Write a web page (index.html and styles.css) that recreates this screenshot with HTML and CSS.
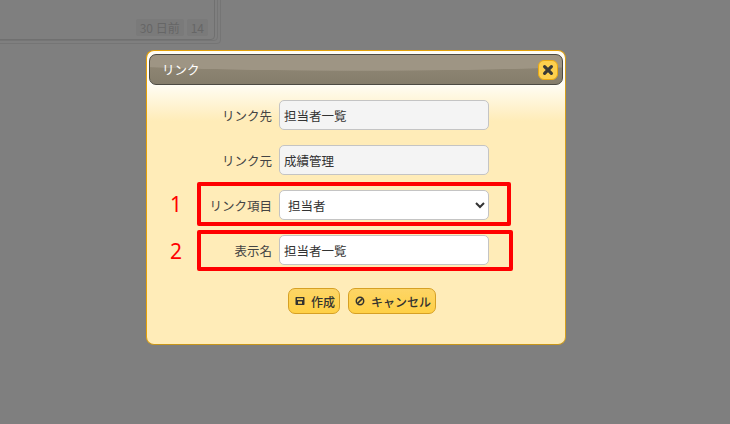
FILE: index.html
```html
<!DOCTYPE html>
<html lang="ja">
<head>
<meta charset="utf-8">
<title>リンク</title>
<link rel="stylesheet" href="styles.css">
</head>
<body>
<div class="backdrop">
  <div class="stack stack-3"></div>
  <div class="stack stack-2"></div>
  <div class="stack stack-1">
    <span class="tag">30 日前</span>
    <span class="tag">14</span>
  </div>
</div>
<div class="dialog">
  <div class="titlebar">
    <span class="title">リンク</span>
    <button class="close" type="button" aria-label="閉じる">
      <svg width="12" height="12" viewBox="0 0 12 12"><path d="M2.6 2.6 9.4 9.4M9.4 2.6 2.6 9.4" stroke="#3a3a36" stroke-width="3.2" stroke-linecap="round" fill="none"/></svg>
    </button>
  </div>
  <div class="body">
    <div class="row">
      <label class="label">リンク先</label>
      <input class="field readonly" value="担当者一覧" readonly>
    </div>
    <div class="row">
      <label class="label">リンク元</label>
      <input class="field readonly" value="成績管理" readonly>
    </div>
    <div class="row">
      <label class="label">リンク項目</label>
      <select class="field select"><option>担当者</option></select>
    </div>
    <div class="row">
      <label class="label">表示名</label>
      <input class="field" value="担当者一覧">
    </div>
    <div class="actions">
      <button class="btn" type="button">
        <svg width="10" height="10" viewBox="0 0 10 10"><path fill-rule="evenodd" d="M1.2 1H8.800000000000001Q9.5 1 9.5 1.7V8.3Q9.5 9 8.8 9H1.2Q.5 9 .5 8.3V1.7Q.5 1 1.2 1ZM2 2.2V4H8V2.2ZM3 5.6V7.800000000000001H7V5.6Z" fill="#33332f"/></svg>
        作成
      </button>
      <button class="btn" type="button">
        <svg width="10" height="10" viewBox="0 0 10 10"><circle cx="5" cy="5" r="3.7" stroke="#33332f" stroke-width="1.5" fill="none"/><path d="M2.6 7.4 7.4 2.6" stroke="#33332f" stroke-width="1.5"/></svg>
        キャンセル
      </button>
    </div>
  </div>
</div>
<div class="mark mark-1"></div>
<div class="mark mark-2"></div>
<span class="num num-1">1</span>
<span class="num num-2">2</span>
</body>
</html>
```
FILE: styles.css
```css
html, body {
  margin: 0;
  height: 100%;
  overflow: hidden;
}
body {
  position: relative;
  width: 730px;
  height: 424px;
  background: #7f7f7f;
  font-family: "Noto Sans CJK JP", "Noto Sans", sans-serif;
}
.backdrop {
  position: absolute;
  left: 0;
  top: 0;
}
.stack {
  position: absolute;
  left: -10px;
  top: -10px;
  box-sizing: border-box;
  border: 1px solid #757575;
  border-radius: 4px;
}
.stack-3 { width: 231px; height: 54px; }
.stack-2 { width: 228px; height: 51px; }
.stack-1 {
  width: 225px;
  height: 50px;
  display: flex;
  justify-content: flex-end;
  align-items: flex-end;
  gap: 3px;
  padding: 0 6px 3px 0;
  border-color: #707070;
}
.tag {
  background: #7a7a7a;
  color: #666;
  font: 12px/17px "Noto Sans CJK JP", sans-serif;
  padding: 0 4px;
  border-radius: 2px;
}
.dialog {
  position: absolute;
  left: 146px;
  top: 50px;
  width: 420px;
  height: 295px;
  box-sizing: border-box;
  border: 1px solid #e3a008;
  border-bottom-color: #c8961a;
  border-right-color: #d69f1c;
  border-radius: 8px;
  background: linear-gradient(#fffdf5 33px, #ffecb8 70px);
  background-color: #ffecb8;
  padding: 3px 2px 0;
  display: flex;
  flex-direction: column;
}
.titlebar {
  height: 31px;
  flex: none;
  box-sizing: border-box;
  border: 1px solid #4c4a42;
  border-radius: 7px;
  display: flex;
  align-items: center;
  justify-content: space-between;
  padding: 0 4px 0 12px;
  background:
    radial-gradient(ellipse 340px 16px at 210px 0, #9e9584 96%, transparent 100%),
    linear-gradient(#938a78, #857d6b);
}
.title {
  color: #fff;
  font-size: 12.5px;
  line-height: 16px;
}
.close {
  width: 20px;
  height: 20px;
  padding: 0;
  box-sizing: border-box;
  border: 1px solid #e9a916;
  border-radius: 6px;
  background: #fdd04e;
  display: flex;
  align-items: center;
  justify-content: center;
}
.body {
  display: flex;
  flex-direction: column;
  padding-top: 15px;
  gap: 15px;
}
.row {
  display: flex;
  align-items: center;
  gap: 7px;
  height: 30px;
}
.label {
  width: 123px;
  text-align: right;
  font-size: 12.5px;
  color: #444;
}
.field {
  width: 210px;
  height: 30px;
  box-sizing: border-box;
  border: 1px solid #c4c4c4;
  border-radius: 5px;
  background: #fff;
  color: #333;
  font: 12.5px "Noto Sans CJK JP", sans-serif;
  padding: 0 4px;
  margin: 0;
  outline: none;
}
.readonly {
  background: #f4f4f4;
}
.select {
  padding-left: 4px;
}
.actions {
  display: flex;
  gap: 8px;
  padding: 8px 0 0 139px;
}
.btn {
  height: 26px;
  box-sizing: border-box;
  display: flex;
  align-items: center;
  gap: 6px;
  padding: 0 4px 0 6px;
  border: 1px solid #d6a024;
  border-radius: 7px;
  background: linear-gradient(#fdd566, #ffd045);
  color: #33332f;
  font: 500 12px "Noto Sans CJK JP", sans-serif;
}
.mark {
  position: absolute;
  box-sizing: border-box;
  border: 4px solid #ff0000;
  border-radius: 2px;
}
.mark-1 { left: 197px; top: 182px; width: 314px; height: 44px; }
.mark-2 { left: 197px; top: 230px; width: 316px; height: 41px; }
.num {
  position: absolute;
  color: #f00;
  font: 21px/24px "Noto Sans", sans-serif;
}
.num-1 { left: 170px; top: 192px; }
.num-2 { left: 170px; top: 239px; }
```
